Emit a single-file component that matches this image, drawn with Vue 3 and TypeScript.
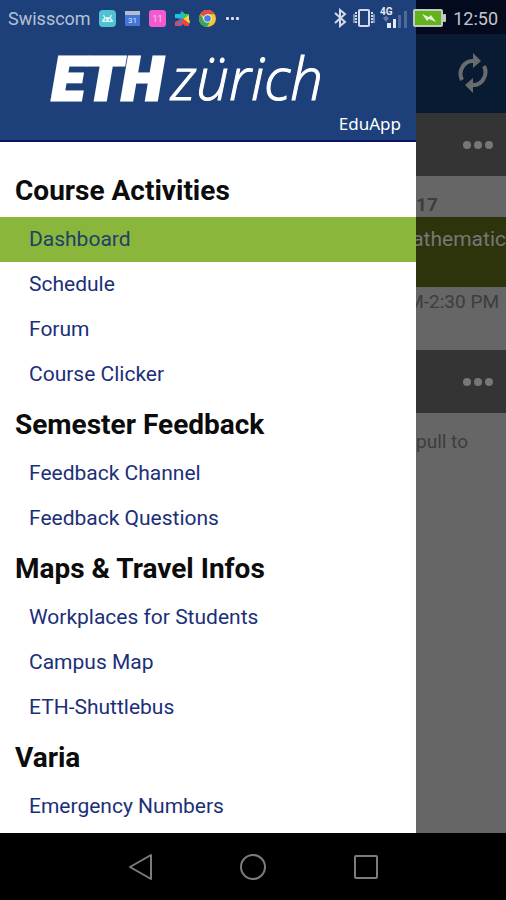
<script setup lang="ts">
interface MenuItem {
  label: string
  active?: boolean
}

interface MenuSection {
  title: string
  items: MenuItem[]
}

const sections: MenuSection[] = [
  {
    title: 'Course Activities',
    items: [
      { label: 'Dashboard', active: true },
      { label: 'Schedule' },
      { label: 'Forum' },
      { label: 'Course Clicker' },
    ],
  },
  {
    title: 'Semester Feedback',
    items: [{ label: 'Feedback Channel' }, { label: 'Feedback Questions' }],
  },
  {
    title: 'Maps & Travel Infos',
    items: [
      { label: 'Workplaces for Students' },
      { label: 'Campus Map' },
      { label: 'ETH-Shuttlebus' },
    ],
  },
  {
    title: 'Varia',
    items: [{ label: 'Emergency Numbers' }],
  },
]
</script>

<template>
  <div class="phone">
    <div class="status">
      <span class="carrier">Swisscom</span>
      <div class="notifications">
        <svg width="17" height="17" viewBox="0 0 17 17" aria-hidden="true">
          <rect width="17" height="17" rx="4" fill="#4fc3d5" />
          <path d="M3 12a5.500 5 0 0 1 11 0z" fill="#d6f5f7" />
          <path d="M4.500 5l1.500 3M12.500 5l-1.500 3" stroke="#d6f5f7" stroke-width="1.200" />
          <circle cx="6.500" cy="10" r="0.900" fill="#4fc3d5" />
          <circle cx="10.500" cy="10" r="0.900" fill="#4fc3d5" />
        </svg>
        <svg width="17" height="17" viewBox="0 0 17 17" aria-hidden="true">
          <rect x="1" y="1" width="15" height="15" rx="1" fill="#4575d6" />
          <rect x="1" y="1" width="15" height="4" fill="#b3bdd2" />
          <text x="8.500" y="13" text-anchor="middle" font-size="8" fill="#dce7ff">31</text>
        </svg>
        <svg width="17" height="17" viewBox="0 0 17 17" aria-hidden="true">
          <rect width="17" height="17" rx="3" fill="#f25bd0" />
          <text x="8.500" y="12" text-anchor="middle" font-size="9" fill="#ffc4ee">11</text>
        </svg>
        <svg width="17" height="17" viewBox="0 0 17 17" aria-hidden="true">
          <path d="M1 4h6l2 5-8-1z" fill="#18c7d8" />
          <path d="M7 1l3 3v6L6 6z" fill="#19b8ef" />
          <path d="M8 1l3 3h4v5H9z" fill="#35c76b" />
          <path d="M15 5v4l1 3-1 2-7-4z" fill="#ffd33a" />
          <path d="M1 16v-4l7-4 7 5v3h-4l-2-2-2 2z" fill="#ee4345" />
          <path d="M2 15l6-7v4l-5 4z" fill="#3f7de8" />
        </svg>
        <svg width="17" height="17" viewBox="0 0 18 18" aria-hidden="true">
          <circle cx="9" cy="9" r="9" fill="#f6c830" />
          <path d="M9 9L1.200 4.500A9 9 0 0 1 16.800 4.500H9z" fill="#de5145" />
          <path d="M1.200 4.500A9 9 0 0 0 8.500 18L12.500 11 9 9 5.500 11z" fill="#39a65b" />
          <circle cx="9" cy="9" r="4.500" fill="#f4f4f4" />
          <circle cx="9" cy="9" r="3.500" fill="#477fe4" />
        </svg>
        <svg width="17" height="17" viewBox="0 0 17 17" fill="#dbe2ed" aria-hidden="true">
          <rect x="2" y="7" width="3" height="3" rx="1" />
          <rect x="7" y="7" width="3" height="3" rx="1" />
          <rect x="12" y="7" width="3" height="3" rx="1" />
        </svg>
      </div>
      <div class="indicators">
        <svg width="15" height="20" viewBox="0 0 15 20" fill="none" stroke="#d3dbe8" stroke-width="2" aria-hidden="true">
          <path d="M2 5l10 9-5 4V2l5 4-10 9" />
        </svg>
        <svg width="22" height="20" viewBox="0 0 22 20" fill="none" stroke="#d3dbe8" aria-hidden="true">
          <rect x="6" y="2" width="10" height="16" rx="1" stroke-width="2" />
          <path d="M3 4v12M19 4v12" stroke-width="2" stroke-dasharray="2 1" />
          <path d="M1 6v9M21 6v9" stroke-width="1" />
        </svg>
        <svg width="28" height="24" viewBox="0 0 28 24" aria-hidden="true">
          <text x="0" y="9" font-size="10" font-weight="700" fill="#e6ebf3">4G</text>
          <path d="M3 12h6l-3 4zM3 12l3-2 3 2z" fill="#6d75a8" />
          <rect x="7" y="17" width="4" height="5" fill="#e6ebf3" />
          <rect x="13" y="13" width="3" height="9" fill="#e6ebf3" />
          <rect x="18" y="9" width="3" height="13" fill="#4d6b99" />
          <rect x="24" y="5" width="3" height="17" fill="#4d6b99" />
        </svg>
        <svg width="33" height="18" viewBox="0 0 33 18" aria-hidden="true">
          <rect x="1" y="1" width="28" height="16" rx="1" fill="#61b51b" stroke="#c4c9c5" stroke-width="2" />
          <rect x="30" y="5" width="3" height="8" rx="1" fill="#c4c9c5" />
          <path d="M9 5l7 3 2-2 5 7-7-3-2 2z" fill="#e3eed8" />
        </svg>
      </div>
      <time class="clock">12:50</time>
    </div>

    <div class="screen">
      <aside class="drawer">
        <header class="brand">
          <h1 class="logo"><span class="logo-mark">ETH</span><span class="logo-city">zürich</span></h1>
          <p class="app-name">EduApp</p>
        </header>
        <nav class="menu" aria-label="Main">
          <section v-for="section in sections" :key="section.title">
            <h2>{{ section.title }}</h2>
            <ul>
              <li v-for="item in section.items" :key="item.label">
                <a href="#" :class="{ active: item.active }">{{ item.label }}</a>
              </li>
            </ul>
          </section>
        </nav>
      </aside>

      <main class="page">
        <div class="toolbar">
          <button type="button" class="refresh" aria-label="Refresh">
            <svg width="32" height="42" viewBox="0 0 32 42" aria-hidden="true">
              <g fill="none" stroke="#696c6d" stroke-width="4">
                <path d="M5 28A12 13 0 0 1 17 9" />
                <path d="M27 14A12 13 0 0 1 15 33" />
              </g>
              <path d="M16 1l8 8-8 7zM16 26l-8 7 8 8z" fill="#696c6d" />
            </svg>
          </button>
        </div>
        <div class="bar">
          <button type="button" class="more" aria-label="More options"><i /><i /><i /></button>
        </div>
        <p class="date">17</p>
        <p class="lecture">athematic</p>
        <p class="hours">M-2:30 PM</p>
        <div class="bar">
          <button type="button" class="more" aria-label="More options"><i /><i /><i /></button>
        </div>
        <p class="hint">pull to</p>
      </main>
    </div>

    <div class="system-nav">
      <button type="button" aria-label="Back">
        <svg width="28" height="28" viewBox="0 0 28 28" aria-hidden="true">
          <path d="M4 14L25 2v24z" />
        </svg>
      </button>
      <button type="button" aria-label="Home">
        <svg width="28" height="28" viewBox="0 0 28 28" aria-hidden="true">
          <circle cx="14" cy="14" r="12" />
        </svg>
      </button>
      <button type="button" aria-label="Recent apps">
        <svg width="28" height="28" viewBox="0 0 28 28" aria-hidden="true">
          <rect x="3" y="3" width="22" height="22" rx="1" />
        </svg>
      </button>
    </div>
  </div>
</template>

<style>
body {
  background: #000;
}
</style>

<style scoped>
.phone {
  position: relative;
  display: flex;
  flex-direction: column;
  min-height: 100vh;
  font-family: Roboto, "Liberation Sans", sans-serif;
}

h1,
h2,
p,
ul {
  margin: 0;
  padding: 0;
}

ul {
  list-style: none;
}

button {
  display: flex;
  align-items: center;
  justify-content: center;
  padding: 0;
  border: 0;
  background: none;
}

svg {
  display: block;
}

.status {
  position: absolute;
  top: 0;
  left: 0;
  right: 0;
  display: flex;
  align-items: center;
  height: 36px;
  padding: 0 8px;
}

.carrier {
  color: #b4c1d6;
  font-size: 18px;
}

.notifications {
  display: flex;
  gap: 8px;
  margin-left: 8px;
}

.indicators {
  display: flex;
  align-items: center;
  gap: 5px;
  margin-left: auto;
}

.clock {
  margin-left: 7px;
  color: #c3c5ca;
  font-size: 18px;
}

.screen {
  flex: 1;
  display: grid;
  grid-template-columns: 1fr 90px;
}

.drawer {
  background: #fff;
}

.brand {
  padding: 43px 15px 6px;
  border-bottom: 2px solid #0a1460;
  background: #1d407a;
  color: #fff;
}

.logo {
  display: flex;
  align-items: baseline;
  gap: 8px;
  padding-left: 37px;
  line-height: 69px;
  font-style: italic;
}

.logo-mark {
  font-size: 60px;
  font-weight: 900;
  -webkit-text-stroke: 3px #fff;
}

.logo-city {
  font-family: "Open Sans", "Noto Sans", sans-serif;
  font-size: 58px;
  font-weight: 300;
  -webkit-text-stroke: 1px #fff;
}

.app-name {
  font-family: "Noto Sans", "Open Sans", sans-serif;
  font-size: 17px;
  line-height: 20px;
  text-align: right;
}

.menu {
  padding-top: 21px;
}

.menu h2 {
  padding: 1px 15px 0;
  color: #0c0c0c;
  font-size: 28px;
  font-weight: 700;
  line-height: 53px;
}

.menu a {
  display: block;
  padding: 0 29px;
  color: #1b2f78;
  font-size: 21px;
  line-height: 45px;
  text-decoration: none;
}

.menu a.active {
  background: #8bb63c;
  color: #1d4068;
}

.page {
  overflow: hidden;
  background: #666;
  color: #3d3d3d;
  font-size: 19px;
  white-space: nowrap;
}

.toolbar {
  display: flex;
  align-items: flex-end;
  justify-content: flex-end;
  padding: 52px 17px 19px;
  background: linear-gradient(#040a1e 34px, #091a33 34px);
}

.bar {
  display: flex;
  align-items: center;
  justify-content: flex-end;
  height: 63px;
  padding-right: 13px;
  background: #343434;
}

.more {
  gap: 3px;
}

.more i {
  width: 8px;
  height: 8px;
  border-radius: 50%;
  background: #777;
}

.date {
  padding-top: 17px;
  font-weight: 700;
  line-height: 24px;
}

.lecture {
  display: flex;
  justify-content: flex-end;
  height: 70px;
  background: #2d330b;
  color: #777;
  font-size: 21px;
  line-height: 45px;
}

.hours {
  display: flex;
  justify-content: flex-end;
  padding: 0 7px 33px 0;
  line-height: 30px;
}

.hint {
  padding-top: 14px;
  line-height: 30px;
}

.system-nav {
  display: flex;
  align-items: center;
  justify-content: center;
  gap: 85px;
  height: 67px;
  background: #000;
}

.system-nav svg {
  fill: none;
  stroke: #7c7c7c;
  stroke-width: 2;
  stroke-linejoin: round;
}
</style>
